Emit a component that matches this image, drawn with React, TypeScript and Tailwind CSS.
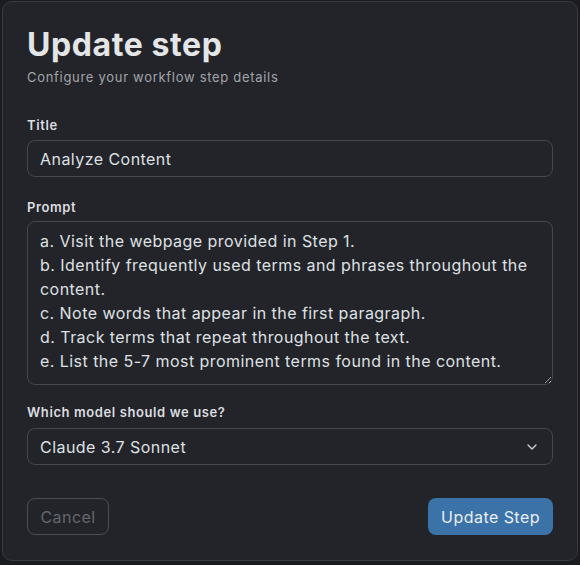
import { ChevronDown } from "lucide-react";

const promptText = `a. Visit the webpage provided in Step 1.
b. Identify frequently used terms and phrases throughout the
content.
c. Note words that appear in the first paragraph.
d. Track terms that repeat throughout the text.
e. List the 5-7 most prominent terms found in the content.`;

export default function App() {
  return (
    <div className="h-[565px] w-[580px] bg-[#1b1c1f] pl-[2px] pt-px font-['Inter',sans-serif]">
      <div className="flex h-[560px] w-[576px] flex-col rounded-[10px] border border-[#393b40] bg-[#222429] px-6 pt-[22px]">
        <h1 className="text-[32px] leading-[42px] font-bold tracking-[0.6px] text-[#e4e5e7]">Update step</h1>
        <p className="mt-[1px] text-[13px] leading-5 tracking-[0.7px] text-[#a3a5a9]">Configure your workflow step details</p>

        <label className="mt-[28px] h-5 text-[13px] leading-5 font-semibold tracking-[0.6px] text-[#dcdde0]">Title</label>
        <input
          readOnly
          value="Analyze Content"
          className="mt-[5px] h-[37px] w-full rounded-lg border border-[#44474c] bg-transparent px-3 text-base tracking-[0.45px] text-[#dfe0e3] outline-none"
        />

        <label className="mt-5 h-5 text-[13px] leading-5 font-semibold tracking-[0.6px] text-[#dcdde0]">Prompt</label>
        <textarea
          readOnly
          value={promptText}
          className="mt-1 h-[164px] w-full resize-y rounded-lg border border-[#44474c] bg-transparent px-3 pt-[7px] text-base leading-6 tracking-[0.45px] text-[#dfe0e3] outline-none"
        />

        <label className="mt-[17px] h-5 text-[13px] leading-5 font-semibold tracking-[0.6px] text-[#dcdde0]">Which model should we use?</label>
        <div className="mt-[6px] flex h-[37px] w-full items-center justify-between rounded-lg border border-[#44474c] px-3">
          <span className="text-base tracking-[0.45px] text-[#dfe0e3]">Claude 3.7 Sonnet</span>
          <ChevronDown className="h-4 w-4 text-[#cfd0d3]" strokeWidth={2} />
        </div>

        <div className="mt-[33px] flex items-center justify-between">
          <button className="h-[37px] w-[82px] rounded-lg border border-[#4a4d52] text-base tracking-[0.45px] text-[#64676c]">Cancel</button>
          <button className="h-[37px] w-[125px] rounded-lg bg-[#3b72a8] text-base tracking-[0.45px] text-[#e9eef4]">Update Step</button>
        </div>
      </div>
    </div>
  );
}
